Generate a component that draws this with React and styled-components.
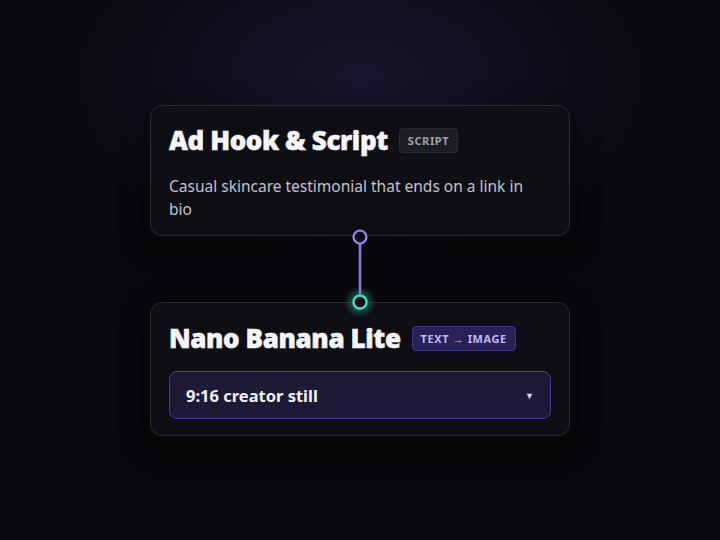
import React from 'react';
import styled, { createGlobalStyle } from 'styled-components';

const GlobalStyle = createGlobalStyle`
  html, body {
    margin: 0;
    height: 100%;
    background: #09090d;
  }
  #root {
    height: 100%;
  }
`;

const Canvas = styled.div`
  height: 540px;
  width: 720px;
  display: flex;
  justify-content: center;
  padding-top: 105px;
  box-sizing: border-box;
  font-family: 'Noto Sans', 'Open Sans', sans-serif;
  background:
    radial-gradient(ellipse 420px 260px at 360px 80px, rgba(48, 40, 110, 0.35), transparent 70%),
    #09090d;
`;

const Flow = styled.div`
  width: 420px;
  display: flex;
  flex-direction: column;
`;

const Node = styled.div`
  position: relative;
  background: #0e0e14;
  border: 1px solid #2b2a36;
  border-radius: 12px;
  padding: ${({ $top }) => $top || 16}px 18px ${({ $bottom }) => $bottom || 16}px;
  box-shadow: 0 10px 30px rgba(0, 0, 0, 0.45);
`;

const TitleRow = styled.div`
  display: flex;
  align-items: center;
  gap: 11px;
`;

const Title = styled.h2`
  margin: 0;
  font-size: 26px;
  line-height: 36px;
  font-weight: 900;
  color: #f6f5fa;
  letter-spacing: -0.4px;
  -webkit-text-stroke: 0.5px #f6f5fa;
`;

const Badge = styled.span`
  font-size: 11px;
  font-weight: 700;
  letter-spacing: 0.6px;
  padding: 4px 8px;
  border-radius: 4px;
  color: ${({ $accent }) => ($accent ? '#c4b8ff' : '#a3a2ae')};
  background: ${({ $accent }) => ($accent ? '#282257' : '#1d1d25')};
  border: 1px solid ${({ $accent }) => ($accent ? '#3c3486' : '#2a2a33')};
`;

const Description = styled.p`
  margin: 17px 0 0;
  max-width: 366px;
  font-size: 15.5px;
  line-height: 23px;
  color: #c3c0d0;
`;

const Select = styled.div`
  margin-top: 15px;
  height: 46px;
  display: flex;
  align-items: center;
  justify-content: space-between;
  padding: 0 16px;
  background: #1c1a36;
  border: 1px solid #4b3f9e;
  border-radius: 8px;
  color: #f3f2fa;
  font-size: 16.5px;
  font-weight: 700;
`;

const Caret = styled.span`
  font-size: 9px;
  color: #d8d5ee;
`;

const Edge = styled.svg`
  display: block;
  align-self: center;
  margin: -8px 0;
  position: relative;
  z-index: 1;
  overflow: visible;
`;

const Connector = () => (
  <Edge width="20" height="82" viewBox="0 0 20 82">
    <defs>
      <radialGradient id="glow">
        <stop offset="0%" stopColor="#3fe0c4" stopOpacity="0.55" />
        <stop offset="100%" stopColor="#3fe0c4" stopOpacity="0" />
      </radialGradient>
    </defs>
    <line x1="10" y1="15" x2="10" y2="66" stroke="#8b7bea" strokeWidth="2.5" />
    <circle cx="10" cy="74" r="16" fill="url(#glow)" />
    <circle cx="10" cy="9" r="6.5" fill="#0e0e14" stroke="#9a8af2" strokeWidth="2.2" />
    <circle cx="10" cy="74" r="6.5" fill="#0a0a10" stroke="#3fe0c4" strokeWidth="2.4" />
  </Edge>
);

const App = () => (
  <>
    <GlobalStyle />
    <Canvas>
      <Flow>
        <Node $top={16} $bottom={14}>
          <TitleRow>
            <Title>Ad Hook &amp; Script</Title>
            <Badge>SCRIPT</Badge>
          </TitleRow>
          <Description>
            Casual skincare testimonial that ends on a link in bio
          </Description>
        </Node>
        <Connector />
        <Node $top={17} $bottom={16}>
          <TitleRow>
            <Title>Nano Banana Lite</Title>
            <Badge $accent>TEXT → IMAGE</Badge>
          </TitleRow>
          <Select>
            <span>9:16 creator still</span>
            <Caret>▼</Caret>
          </Select>
        </Node>
      </Flow>
    </Canvas>
  </>
);

export default App;
